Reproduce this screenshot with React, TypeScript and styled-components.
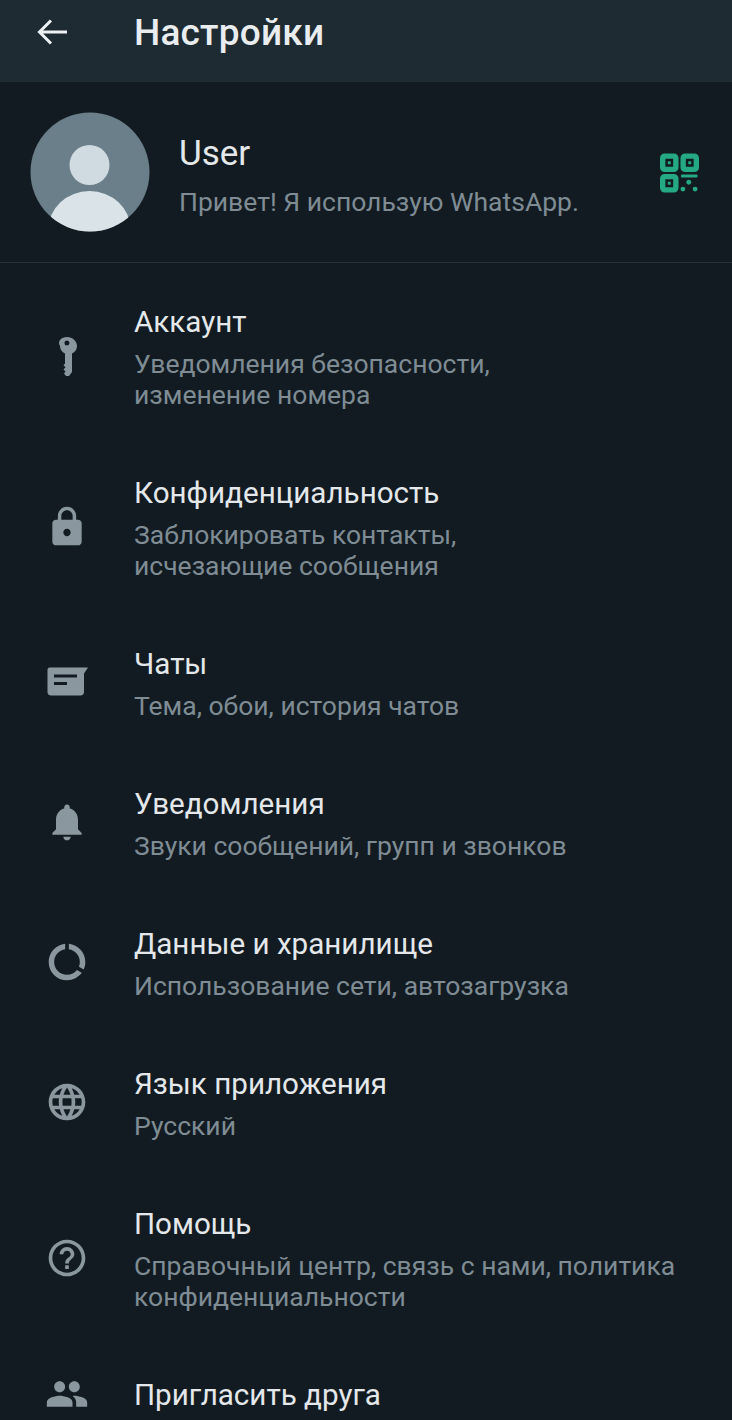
import React from 'react';
import styled, { createGlobalStyle } from 'styled-components';

type SettingsItem = Readonly<{
    title: string;
    lines: ReadonlyArray<string>;
    icon: React.ReactNode;
}>;

const GlobalStyle = createGlobalStyle`
    html, body {
        margin: 0;
        padding: 0;
        background: #121b22;
    }
`;

const MaterialIcon = ({ d }: Readonly<{ d: string }>) => (
    <IconSvg viewBox="0 0 24 24" fill="#8a979f">
        <path d={d} />
    </IconSvg>
);

const KeyIcon = () => (
    <IconSvg viewBox="0 0 44 44" fill="#8a979f">
        <path
            fillRule="evenodd"
            d="M22 3c5.500 0 10 4 10 9 0 3.500-2 6-5 7.500V38l-3 4h-3l-2-2.500 1.500-2-2-2 2-2.200-2-2 1.500-1.800v-10c-3-1.500-5-4-5-7.500C12 7 16.500 3 22 3zm0 3.500a2.500 2.500 0 1 0 0 5 2.500 2.500 0 0 0 0-5z"
        />
    </IconSvg>
);

const ChatIcon = () => (
    <IconSvg viewBox="0 0 44 44" fill="#8a979f">
        <path d="M4.500 7.500h38.500l-4 6V32c0 2-1.400 3.500-3.500 3.500H6c-2.200 0-3.500-1.500-3.500-3.500V10c0-1.500.8-2.500 2-2.500z" />
        <rect x="9" y="14.500" width="23" height="3" fill="#121b22" />
        <rect x="9" y="22" width="13" height="3" fill="#121b22" />
    </IconSvg>
);

const QrIcon = () => (
    <QrSvg viewBox="0 0 40 40">
        <g fill="none" stroke="#25a884" strokeWidth="5.500">
            <rect x="2.750" y="2.750" width="13.500" height="13.500" rx="2" />
            <rect x="23.750" y="2.750" width="13.500" height="13.500" rx="2" />
            <rect x="2.750" y="23.750" width="13.500" height="13.500" rx="2" />
        </g>
        <g fill="#25a884">
            <rect x="8" y="8" width="3" height="3" />
            <rect x="29" y="8" width="3" height="3" />
            <rect x="8" y="29" width="3" height="3" />
            <rect x="21.500" y="21.500" width="17" height="3" rx="1" />
            <circle cx="29.500" cy="29.500" r="2.500" />
            <circle cx="23.500" cy="36.500" r="2.500" />
            <circle cx="36" cy="36.500" r="2.500" />
        </g>
    </QrSvg>
);

const items: ReadonlyArray<SettingsItem> = [
    {
        title: 'Аккаунт',
        lines: ['Уведомления безопасности,', 'изменение номера'],
        icon: <KeyIcon />,
    },
    {
        title: 'Конфиденциальность',
        lines: ['Заблокировать контакты,', 'исчезающие сообщения'],
        icon: (
            <MaterialIcon d="M18 8h-1V6c0-2.760-2.240-5-5-5S7 3.240 7 6v2H6c-1.100 0-2 .9-2 2v10c0 1.100.9 2 2 2h12c1.100 0 2-.9 2-2V10c0-1.100-.9-2-2-2zm-6 9c-1.100 0-2-.9-2-2s.9-2 2-2 2 .9 2 2-.9 2-2 2zm3.100-9H8.900V6c0-1.710 1.390-3.100 3.100-3.100 1.710 0 3.100 1.390 3.100 3.100v2z" />
        ),
    },
    {
        title: 'Чаты',
        lines: ['Тема, обои, история чатов'],
        icon: <ChatIcon />,
    },
    {
        title: 'Уведомления',
        lines: ['Звуки сообщений, групп и звонков'],
        icon: (
            <MaterialIcon d="M12 22c1.100 0 2-.9 2-2h-4c0 1.100.89 2 2 2zm6-6v-5c0-3.070-1.640-5.640-4.500-6.320V4c0-.83-.67-1.500-1.500-1.500s-1.500.67-1.500 1.500v.68C7.630 5.360 6 7.920 6 11v5l-2 2v1h16v-1l-2-2z" />
        ),
    },
    {
        title: 'Данные и хранилище',
        lines: ['Использование сети, автозагрузка'],
        icon: (
            <MaterialIcon d="M13 2.050v3.030c3.390.49 6 3.390 6 6.920 0 .9-.18 1.750-.48 2.540l2.600 1.530c.56-1.240.88-2.600.88-4.070 0-5.180-3.950-9.450-9-9.950zM12 19c-3.870 0-7-3.130-7-7 0-3.530 2.610-6.430 6-6.920V2.050c-5.060.5-9 4.760-9 9.950 0 5.520 4.470 10 9.990 10 3.310 0 6.240-1.610 8.060-4.090l-2.600-1.530C16.170 17.980 14.210 19 12 19z" />
        ),
    },
    {
        title: 'Язык приложения',
        lines: ['Русский'],
        icon: (
            <MaterialIcon d="M11.990 2C6.470 2 2 6.480 2 12s4.470 10 9.990 10C17.520 22 22 17.520 22 12S17.520 2 11.990 2zm6.930 6h-2.950c-.32-1.250-.78-2.450-1.380-3.560 1.840.63 3.370 1.910 4.330 3.560zM12 4.040c.83 1.200 1.480 2.530 1.910 3.960h-3.820c.43-1.430 1.080-2.760 1.910-3.960zM4.260 14C4.100 13.360 4 12.690 4 12s.1-1.360.26-2h3.380c-.08.66-.14 1.320-.14 2 0 .68.06 1.340.14 2H4.260zm.82 2h2.950c.32 1.250.78 2.450 1.380 3.560-1.840-.63-3.370-1.900-4.330-3.560zm2.950-8H5.080c.96-1.660 2.490-2.930 4.330-3.560C8.810 5.550 8.350 6.750 8.030 8zM12 19.960c-.83-1.200-1.480-2.530-1.910-3.960h3.820c-.43 1.430-1.080 2.760-1.910 3.960zM14.340 14H9.660c-.09-.66-.16-1.320-.16-2 0-.68.07-1.350.16-2h4.680c.09.65.16 1.320.16 2 0 .68-.07 1.340-.16 2zm.25 5.560c.6-1.110 1.060-2.310 1.380-3.560h2.950c-.96 1.650-2.490 2.930-4.330 3.560zM16.360 14c.08-.66.14-1.320.14-2 0-.68-.06-1.340-.14-2h3.380c.16.64.26 1.310.26 2s-.1 1.360-.26 2h-3.380z" />
        ),
    },
    {
        title: 'Помощь',
        lines: ['Справочный центр, связь с нами, политика', 'конфиденциальности'],
        icon: (
            <MaterialIcon d="M11 18h2v-2h-2v2zm1-16C6.480 2 2 6.480 2 12s4.480 10 10 10 10-4.480 10-10S17.520 2 12 2zm0 18c-4.410 0-8-3.590-8-8s3.590-8 8-8 8 3.590 8 8-3.590 8-8 8zm0-14c-2.210 0-4 1.790-4 4h2c0-1.100.9-2 2-2s2 .9 2 2c0 2-3 1.750-3 5h2c0-2.250 3-2.500 3-5 0-2.210-1.790-4-4-4z" />
        ),
    },
    {
        title: 'Пригласить друга',
        lines: [],
        icon: (
            <MaterialIcon d="M16 11c1.660 0 2.990-1.340 2.990-3S17.660 5 16 5c-1.660 0-3 1.340-3 3s1.340 3 3 3zm-8 0c1.660 0 2.990-1.340 2.990-3S9.660 5 8 5C6.340 5 5 6.340 5 8s1.340 3 3 3zm0 2c-2.330 0-7 1.170-7 3.500V19h14v-2.500c0-2.330-4.670-3.500-7-3.500zm8 0c-.29 0-.62.02-.97.05 1.160.84 1.970 1.970 1.970 3.450V19h6v-2.500c0-2.330-4.670-3.500-7-3.500z" />
        ),
    },
];

const App = () => (
    <Page>
        <GlobalStyle />
        <Header>
            <BackSvg viewBox="0 0 32 28">
                <path
                    d="M30 14H3M14 2.500 2.500 14 14 25.500"
                    fill="none"
                    stroke="#eef2f4"
                    strokeWidth="3"
                />
            </BackSvg>
            <Title>Настройки</Title>
        </Header>
        <Profile>
            <AvatarSvg viewBox="0 0 120 120">
                <defs>
                    <clipPath id="avatar-clip">
                        <circle cx="60" cy="60" r="59.500" />
                    </clipPath>
                </defs>
                <circle cx="60" cy="60" r="59.500" fill="#6b7f8a" />
                <circle cx="59.500" cy="53" r="20" fill="#cfdbe1" />
                <ellipse
                    cx="59.500"
                    cy="117"
                    rx="41"
                    ry="38"
                    fill="#d9e3e8"
                    clipPath="url(#avatar-clip)"
                />
            </AvatarSvg>
            <ProfileText>
                <ProfileName>User</ProfileName>
                <ProfileStatus>Привет! Я использую WhatsApp.</ProfileStatus>
            </ProfileText>
            <QrIcon />
        </Profile>
        <List>
            {items.map(({ title, lines, icon }) => (
                <Row key={title}>
                    <IconCell>{icon}</IconCell>
                    <RowText>
                        <RowTitle>{title}</RowTitle>
                        {lines.length > 0 && (
                            <RowSub>
                                {lines.map((line) => (
                                    <div key={line}>{line}</div>
                                ))}
                            </RowSub>
                        )}
                    </RowText>
                </Row>
            ))}
        </List>
    </Page>
);

const Page = styled.div`
    width: 732px;
    height: 1420px;
    overflow: hidden;
    background: #121b22;
    font-family: Roboto, 'Liberation Sans', sans-serif;
`;

const Header = styled.header`
    height: 82px;
    padding: 0 0 18px 37px;
    box-sizing: border-box;
    display: flex;
    align-items: center;
    background: #1f2b33;
`;

const BackSvg = styled.svg`
    width: 32px;
    height: 28px;
    flex: none;
`;

const Title = styled.h1`
    margin: 0 0 -2px 65px;
    font-size: 37px;
    font-weight: 500;
    letter-spacing: 0.2px;
    line-height: 40px;
    color: #e9edef;
`;

const Profile = styled.section`
    height: 181px;
    padding: 0 33px 0 30px;
    box-sizing: border-box;
    display: flex;
    align-items: center;
    border-bottom: 1px solid #27323a;
`;

const AvatarSvg = styled.svg`
    width: 120px;
    height: 120px;
    flex: none;
    margin-top: -1px;
`;

const ProfileText = styled.div`
    flex: 1;
    margin: 7px 0 0 29px;
`;

const ProfileName = styled.div`
    font-size: 35px;
    line-height: 40px;
    color: #e4e8ea;
`;

const ProfileStatus = styled.div`
    margin-top: 12px;
    font-size: 26.500px;
    line-height: 32px;
    color: #7f8c94;
`;

const QrSvg = styled.svg`
    width: 39px;
    height: 40px;
    flex: none;
    margin-top: 1px;
`;

const List = styled.div`
    padding-top: 9px;
`;

const Row = styled.div`
    display: flex;
    align-items: center;
    padding: 32px 0 33.500px;
`;

const IconCell = styled.div`
    width: 134px;
    height: 32px;
    flex: none;
    display: flex;
    align-items: center;
    justify-content: center;
    margin-bottom: 2px;
`;

const IconSvg = styled.svg`
    width: 44px;
    height: 44px;
    flex: none;
`;

const RowText = styled.div`
    flex: 1;
    min-width: 0;
`;

const RowTitle = styled.div`
    font-size: 29.600px;
    line-height: 36px;
    color: #e4e8ea;
`;

const RowSub = styled.div`
    margin-top: 7.500px;
    font-size: 26.500px;
    line-height: 31px;
    color: #7f8c94;
`;

export default App;
